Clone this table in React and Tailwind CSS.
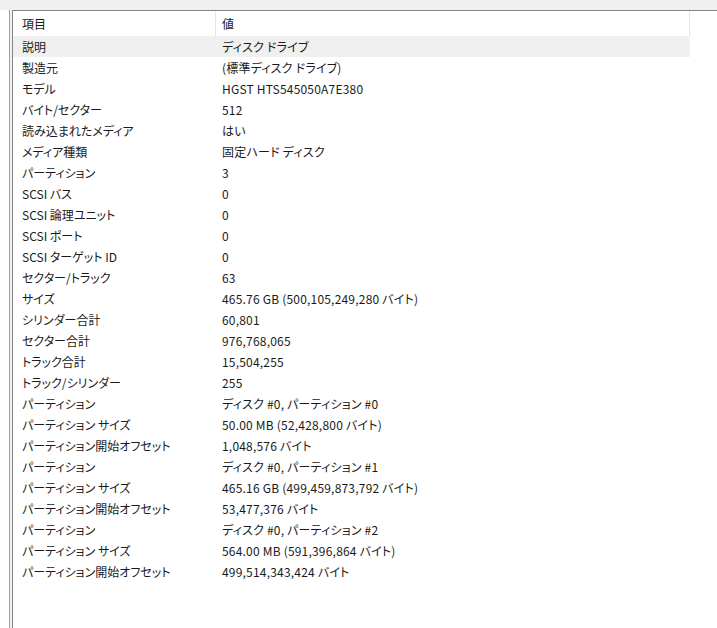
const ROWS = [
  ['説明', 'ディスク ドライブ'],
  ['製造元', '(標準ディスク ドライブ)'],
  ['モデル', 'HGST HTS545050A7E380'],
  ['バイト/セクター', '512'],
  ['読み込まれたメディア', 'はい'],
  ['メディア種類', '固定ハード ディスク'],
  ['パーティション', '3'],
  ['SCSI バス', '0'],
  ['SCSI 論理ユニット', '0'],
  ['SCSI ポート', '0'],
  ['SCSI ターゲット ID', '0'],
  ['セクター/トラック', '63'],
  ['サイズ', '465.76 GB (500,105,249,280 バイト)'],
  ['シリンダー合計', '60,801'],
  ['セクター合計', '976,768,065'],
  ['トラック合計', '15,504,255'],
  ['トラック/シリンダー', '255'],
  ['パーティション', 'ディスク #0, パーティション #0'],
  ['パーティション サイズ', '50.00 MB (52,428,800 バイト)'],
  ['パーティション開始オフセット', '1,048,576 バイト'],
  ['パーティション', 'ディスク #0, パーティション #1'],
  ['パーティション サイズ', '465.16 GB (499,459,873,792 バイト)'],
  ['パーティション開始オフセット', '53,477,376 バイト'],
  ['パーティション', 'ディスク #0, パーティション #2'],
  ['パーティション サイズ', '564.00 MB (591,396,864 バイト)'],
  ['パーティション開始オフセット', '499,514,343,424 バイト'],
]

export default function App() {
  return (
    <div
      className="flex h-[628px] w-[717px] overflow-hidden bg-white text-[12px] text-[#1a1a1a] [font-feature-settings:'palt']"
      style={{ fontFamily: '"Noto Sans CJK JP", "Noto Sans", sans-serif' }}
    >
      {/* left pane edge + splitter */}
      <div className="flex flex-col">
        <div className="h-[10px] w-[9px] bg-[#f0f0f0]" />
        <div className="flex-1 bg-white" />
      </div>
      <div className="flex flex-col">
        <div className="h-[10px] w-[4px] bg-[#f0f0f0]" />
        <div className="flex flex-1">
          <div className="w-px bg-[#a0a0a0]" />
          <div className="w-[2px] bg-[#f0f0f0]" />
          <div className="w-px bg-[#828790]" />
        </div>
      </div>

      {/* list view */}
      <div className="flex flex-1 flex-col">
        <div className="h-[10px] bg-[#f0f0f0]" />
        <div className="h-px bg-[#828282]" />
        <div className="flex h-[25px] w-[677px] items-center">
          <div className="flex h-full w-[203px] items-center border-r border-[#e5e5e5] pl-[9px]">項目</div>
          <div className="flex h-full flex-1 items-center border-r border-[#e5e5e5] pl-[6px]">値</div>
        </div>
        {ROWS.map(([k, v], i) => (
          <div
            key={i}
            className={`flex h-[21px] w-[677px] items-center ${i === 0 ? 'bg-[#f0f0f0]' : ''}`}
          >
            <div className="w-[203px] whitespace-nowrap pl-[9px]">{k}</div>
            <div className="flex-1 whitespace-nowrap pl-[6px] tracking-[0.2px]">{v}</div>
          </div>
        ))}
      </div>
    </div>
  )
}
